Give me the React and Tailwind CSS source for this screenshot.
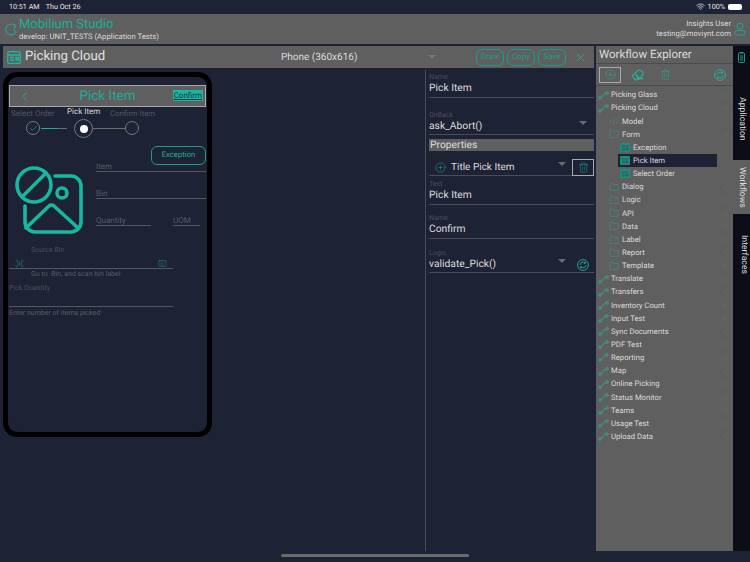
import React from "react";
import {
  Check,
  ChevronDown,
  ChevronLeft,
  CirclePlus,
  CodeXml,
  Folder,
  Keyboard,
  ScanBarcode,
  Trash2,
  Wifi,
  X
} from "lucide-react";

function WorkflowIcon() {
  return (
    <svg width="11" height="9" viewBox="0 0 11 9" fill="none" stroke="#27b39b" strokeWidth="0.8" className="shrink-0">
      <circle cx="2" cy="7" r="1.3" />
      <circle cx="9" cy="2" r="1.3" />
      <path d="M3.2 6.4C5.6 6 4.6 2.6 7.8 2.3" />
    </svg>
  );
}

function FormIcon() {
  return (
    <svg width="10" height="9" viewBox="0 0 10 9" className="shrink-0 mr-px">
      <rect width="10" height="9" rx="1" fill="#1a8f7e" />
      <path d="M1 3h8M2 5h3M2 7h3M6 5h2v2H6z" stroke="#3c4a55" strokeWidth="0.8" fill="none" />
    </svg>
  );
}

function PanelIcon() {
  return (
    <svg width="14" height="13" viewBox="0 0 14 13" fill="none" stroke="#1fb89f" strokeWidth="1.3">
      <rect x="0.7" y="0.7" width="12.6" height="11.6" rx="1.6" />
      <path d="M1 4h12M3 6.5h4M3 9h4M9 6.5h2.5V9H9z" />
    </svg>
  );
}

function LogoIcon() {
  return (
    <svg width="12" height="13" viewBox="0 0 12 13" fill="none" stroke="#1fa890" strokeWidth="1.1">
      <path d="M5 1.2C7.8.6 10.6 2 10.8 3.6 8.6 4 8.2 8 10.8 9.2 9.8 11.4 6.6 12.4 4.4 11.6 1.6 10.6.6 8 1 5.4 1.4 3.2 3 1.6 5 1.2Z" />
    </svg>
  );
}

function UserIcon() {
  return (
    <svg width="12" height="14" viewBox="0 0 12 14" fill="none" stroke="#1fa890" strokeWidth="1">
      <circle cx="6" cy="4" r="3" />
      <rect x="1" y="8.5" width="10" height="4.5" rx="2.2" />
    </svg>
  );
}

function EraseIcon() {
  return (
    <svg width="12" height="12" viewBox="0 0 12 12" fill="none" stroke="#1fb89f" strokeWidth="1">
      <rect x="0.6" y="2.6" width="10.8" height="6.8" rx="3.2" transform="rotate(-40 6 6)" />
      <path d="M3.6 5.2 7 9.2M5 9.5h6" strokeWidth="1.4" />
    </svg>
  );
}

function SyncIcon({ className }) {
  return (
    <svg width="12" height="12" viewBox="0 0 12 12" fill="none" stroke="#1fb89f" strokeWidth="0.9" className={className}>
      <circle cx="6" cy="6" r="5.4" />
      <path d="M3 6a3 3 0 0 1 5.2-2M9 6a3 3 0 0 1-5.2 2M8.4 2.6V4.2H6.9M3.6 9.4V7.8H5.1" />
    </svg>
  );
}

function NoImageIcon() {
  return (
    <svg width="68" height="68" viewBox="0 0 68 68" fill="none" stroke="#17b8a0" strokeWidth="3.6" strokeLinecap="round" strokeLinejoin="round">
      <circle cx="19" cy="19" r="17" />
      <path d="M7 31 31 7" />
      <path d="M40 10h16a10 10 0 0 1 10 10v36a10 10 0 0 1-10 10H20a10 10 0 0 1-10-10V40" />
      <circle cx="47" cy="27" r="5" />
      <path d="M11 62 34 40a4 4 0 0 1 5 0l23 21" />
    </svg>
  );
}

function OutlineButton({ label }) {
  return (
    <div className="w-[28px] h-[17px] rounded-[6px] border-[1.5px] border-[#1a9e8a] flex items-center justify-center text-[8px] text-[#1a9e8a]">
      {label}
    </div>
  );
}

function Field({ label, value, caret, after, className }) {
  return (
    <div className={"relative border-b border-[#4a4c58] " + className}>
      <div className="text-[7px] leading-[8px] text-[#4b4e5c]">{label}</div>
      <div className="text-[10.3px] leading-[14px] text-[#dcdcdc]">{value}</div>
      {caret && <div className={"absolute top-[10px] w-0 h-0 border-x-[4px] border-x-transparent border-t-[4px] border-t-[#6b6b6b] " + caret} />}
      {after}
    </div>
  );
}

function PhoneField({ label, className }) {
  return (
    <div className={"h-[10px] border-b border-[#55565f] text-[8px] leading-[10px] text-[#5a5c66] " + className}>
      {label}
    </div>
  );
}

function Phone() {
  return (
    <div className="ml-[3px] mt-[4px] w-[209px] h-[365px] rounded-[14px] border-[5px] border-black bg-[#1e2235]">
      <div className="mt-[8px] mx-px h-[22px] bg-[#5f5f5f] border border-[#a9a9a9] flex items-center relative">
        <ChevronLeft size={15} strokeWidth={1.4} className="text-[#1fb89f] ml-[7px]" />
        <div className="flex-1 text-center text-[13.5px] text-[#1cae98] pr-[22px] mt-px">Pick Item</div>
        <div className="absolute right-[2px] top-[4px] h-[11px] px-px bg-[#14b8a0] text-[8px] leading-[11px] text-[#20323a] underline">Confirm</div>
      </div>

      <div className="relative h-[39px]">
        <div className="absolute left-[3px] top-[2px] text-[8px] leading-[10px] text-[#55565f]">Select Order</div>
        <div className="absolute left-[59px] top-0 text-[8px] leading-[10px] text-[#dcdcdc]">Pick Item</div>
        <div className="absolute left-[102px] top-[2px] text-[7.8px] leading-[10px] text-[#55565f]">Confirm Item</div>
        <div className="absolute left-[18px] top-[14px] w-[14px] h-[14px] rounded-full border border-[#777] flex items-center justify-center">
          <Check size={9} strokeWidth={1.6} className="text-[#1fb89f]" />
        </div>
        <div className="absolute left-[33px] top-[21px] w-[17px] h-px bg-[#1cae98]" />
        <div className="absolute left-[50px] top-[21px] w-[9px] h-px bg-[#6b6b6b]" />
        <div className="absolute left-[66px] top-[12px] w-[19px] h-[19px] rounded-full border border-[#777] flex items-center justify-center">
          <div className="w-[8px] h-[8px] rounded-full bg-white" />
        </div>
        <div className="absolute left-[85px] top-[21px] w-[32px] h-px bg-[#6b6b6b]" />
        <div className="absolute left-[117px] top-[14px] w-[14px] h-[14px] rounded-full border border-[#777]" />
      </div>

      <div className="flex justify-end h-[19px]">
        <div className="w-[55px] h-[19px] rounded-[6px] border-[1.5px] border-[#1a9e8a] text-[7.7px] leading-[16px] text-center text-[#1cae98] mr-px">Exception</div>
      </div>

      <div className="flex h-[67px]">
        <div className="ml-[7px] mt-px w-[81px] shrink-0">
          <NoImageIcon />
        </div>
        <div className="flex-1 mr-px -mt-[3px]">
          <PhoneField label="Item" className="" />
          <PhoneField label="Bin" className="mt-[17px]" />
          <div className="flex mt-[17px]">
            <PhoneField label="Quantity" className="w-[55px]" />
            <PhoneField label="UOM" className="w-[27px] ml-[22px]" />
          </div>
        </div>
      </div>

      <div className="mt-[13px] ml-[23px] text-[7px] leading-[10px] text-[#4f505b]">Source Bin</div>
      <div className="mt-[4px] mx-px w-[164px] h-[10px] border-b border-[#55565f] flex justify-between px-[6px]">
        <ScanBarcode size={9} strokeWidth={1.2} className="text-[#1a9e8a]" />
        <Keyboard size={9} strokeWidth={1.2} className="text-[#1a9e8a]" />
      </div>
      <div className="ml-[23px] text-[7px] leading-[10px] text-[#5a5c66]">Go to&nbsp; Bin, and scan bin label</div>
      <div className="mt-[4px] ml-px text-[7px] leading-[10px] text-[#4f505b]">Pick Quantity</div>
      <div className="ml-px w-[164px] h-[14px] border-b border-[#55565f]" />
      <div className="mt-px ml-px text-[7px] leading-[10px] text-[#5a5c66]">Enter number of items picked</div>
    </div>
  );
}

function Properties() {
  return (
    <div className="w-[169px] ml-[3px] border-l border-[#4a4c58] pl-[3px] pt-[3px] mt-[2px]">
      <Field label="Name" value="Pick Item" className="h-[25px]" />
      <Field label="OnBack" value="ask_Abort()" caret="right-[7px]" className="mt-[13px] h-[24px]" />
      <div className="mt-[4px] h-[12px] bg-[#5f5f5f] text-[10.3px] leading-[12px] text-[#dcdcdc] pl-px">Properties</div>
      <div className="relative mt-[8px] h-[17px] border-b border-[#4a4c58] flex items-center">
        <CirclePlus size={11} strokeWidth={1} className="text-[#1fb89f] ml-[6px]" />
        <span className="ml-[5px] text-[10px] text-[#dcdcdc]">Title Pick Item</span>
        <div className="absolute left-[129px] top-[3px] w-0 h-0 border-x-[4px] border-x-transparent border-t-[4px] border-t-[#6b6b6b]" />
        <div className="absolute right-0 top-0 w-[22px] h-[17px] border border-[#a9a9a9] flex items-center justify-center">
          <Trash2 size={11} strokeWidth={1} className="text-[#1fb89f]" />
        </div>
      </div>
      <Field label="Text" value="Pick Item" className="mt-[4px] h-[25px]" />
      <Field label="Name" value="Confirm" className="mt-[9px] h-[25px]" />
      <Field
        label="Logic"
        value="validate_Pick()"
        caret="left-[129px]"
        className="mt-[10px] h-[24px]"
        after={<SyncIcon className="absolute right-[5px] top-[10px]" />}
      />
    </div>
  );
}

const tree = [
  { name: "Picking Glass", kind: "flow", chev: "left" },
  { name: "Picking Cloud", kind: "flow", chev: "down" },
  { name: "Model", kind: "code" },
  { name: "Form", kind: "folder", chev: "down" },
  { name: "Exception", kind: "form" },
  { name: "Pick Item", kind: "form", active: true },
  { name: "Select Order", kind: "form" },
  { name: "Dialog", kind: "folder", chev: "left" },
  { name: "Logic", kind: "folder", chev: "left" },
  { name: "API", kind: "folder", chev: "left" },
  { name: "Data", kind: "folder", chev: "left" },
  { name: "Label", kind: "folder", chev: "left" },
  { name: "Report", kind: "folder", chev: "left" },
  { name: "Template", kind: "folder", chev: "left" },
  { name: "Translate", kind: "flow", chev: "left" },
  { name: "Transfers", kind: "flow", chev: "left" },
  { name: "Inventory Count", kind: "flow", chev: "left" },
  { name: "Input Test", kind: "flow", chev: "left" },
  { name: "Sync Documents", kind: "flow", chev: "left" },
  { name: "PDF Test", kind: "flow", chev: "left" },
  { name: "Reporting", kind: "flow", chev: "left" },
  { name: "Map", kind: "flow", chev: "left" },
  { name: "Online Picking", kind: "flow", chev: "left" },
  { name: "Status Monitor", kind: "flow", chev: "left" },
  { name: "Teams", kind: "flow", chev: "left" },
  { name: "Usage Test", kind: "flow", chev: "left" },
  { name: "Upload Data", kind: "flow", chev: "left" }
];

function TreeRow({ item }) {
  const pad = item.kind === "flow" ? "pl-[2px]" : item.kind === "form" ? "pl-[24px]" : "pl-[13px]";
  return (
    <div className={"relative h-[13.15px] flex items-center text-[7.7px] text-[#dcdcdc] " + pad}>
      {item.active && <div className="absolute left-[22px] top-0 w-[99px] h-[13.15px] bg-[#1e2235]" />}
      <div className="relative flex items-center gap-[2px]">
        {item.kind === "flow" && <WorkflowIcon />}
        {item.kind === "code" && <CodeXml size={10} strokeWidth={1} className="text-[#27b39b] shrink-0 mr-px" />}
        {item.kind === "folder" && <Folder size={10} strokeWidth={1} className="text-[#27b39b] shrink-0 mr-px" />}
        {item.kind === "form" && <FormIcon />}
        <span className="whitespace-nowrap">{item.name}</span>
      </div>
      {item.chev === "left" && <ChevronLeft size={11} strokeWidth={1} className="absolute right-[2px] text-[#767676]" />}
      {item.chev === "down" && <ChevronDown size={11} strokeWidth={1} className="absolute right-[2px] text-[#767676]" />}
    </div>
  );
}

function Explorer() {
  return (
    <div className="w-[137px] ml-[2px] bg-[#5f5f5f] flex flex-col">
      <div className="h-[18px] border-b border-[#4a4a4a] text-[11.5px] leading-[17px] text-[#dcdcdc] pl-[3px]">Workflow Explorer</div>
      <div className="h-[22px] border-b border-[#4a4a4a] flex items-center relative">
        <div className="ml-[3px] w-[22px] h-[16px] border border-[#a9a9a9] flex items-center justify-center">
          <CirclePlus size={11} strokeWidth={1} className="text-[#1fb89f]" />
        </div>
        <div className="ml-[11px]">
          <EraseIcon />
        </div>
        <Trash2 size={11} strokeWidth={1} className="ml-[16px] text-[#1fb89f]" />
        <SyncIcon className="absolute right-[7px]" />
      </div>
      <div className="pt-[2.5px]">
        {tree.map((item) => (
          <TreeRow key={item.name} item={item} />
        ))}
      </div>
    </div>
  );
}

function Tabs() {
  return (
    <div className="w-[17px] flex flex-col bg-[#0c0d16] text-[8.7px] text-[#dcdcdc]">
      <div className="h-[22px] flex items-center justify-center">
        <svg width="7" height="11" viewBox="0 0 7 11" fill="none" stroke="#1a9e8a" strokeWidth="1">
          <rect x="0.5" y="1" width="6" height="9.5" rx="1" />
          <path d="M2 0.5h3M2 4h3M2 6h3M2 8h3" />
        </svg>
      </div>
      <div className="h-[92px] pt-[9px] flex items-center justify-center [writing-mode:vertical-rl]">Application</div>
      <div className="h-[54px] bg-[#5f5f5f] flex items-center justify-center [writing-mode:vertical-rl]">Workflows</div>
      <div className="pt-[21px] flex justify-center [writing-mode:vertical-rl]">Interfaces</div>
    </div>
  );
}

export default function App() {
  return (
    <div className="w-[750px] h-[562px] overflow-hidden bg-[#1e2235] font-['Roboto',sans-serif] [text-rendering:geometricPrecision]">
      <div className="h-[14px] flex items-center justify-between pl-[9px] pr-[8px] text-[7.2px] text-[#e6e6e6]">
        <div className="flex gap-[6px]">
          <span>10:51 AM</span>
          <span>Thu Oct 26</span>
        </div>
        <div className="flex items-center gap-[3px]">
          <Wifi size={9} strokeWidth={2} />
          <span>100%</span>
          <div className="w-[14px] h-[6px] rounded-[2px] bg-white" />
        </div>
      </div>

      <div className="h-[30px] bg-[#5f5f5f] flex items-center pl-[5px] pr-[4px]">
        <LogoIcon />
        <div className="ml-[2px]">
          <div className="text-[13px] leading-[14px] text-[#1cae98] mt-px">Mobilium Studio</div>
          <div className="text-[7.7px] leading-[10px] text-[#dcdcdc]">develop: UNIT_TESTS (Application Tests)</div>
        </div>
        <div className="ml-auto text-right text-[7.7px] leading-[10px] text-[#dcdcdc]">
          <div>Insights User</div>
          <div>testing@moviynt.com</div>
        </div>
        <div className="ml-[3px]">
          <UserIcon />
        </div>
      </div>

      <div className="mt-[2px] h-[505px] flex pl-[3px]">
        <div className="w-[591px] flex flex-col">
          <div className="h-[22px] bg-[#5f5f5f] flex items-center relative">
            <div className="ml-[4px]">
              <PanelIcon />
            </div>
            <div className="ml-[4px] text-[13.2px] text-[#e0e0e0]">Picking Cloud</div>
            <div className="absolute left-[278px] text-[10px] text-[#dcdcdc]">Phone (360x616)</div>
            <div className="absolute left-[425px] top-[9px] w-0 h-0 border-x-[4px] border-x-transparent border-t-[4px] border-t-[#777]" />
            <div className="ml-auto flex items-center gap-[3px] mr-[7px]">
              <OutlineButton label="Draw" />
              <OutlineButton label="Copy" />
              <OutlineButton label="Save" />
              <X size={13} strokeWidth={1.3} className="ml-[5px] text-[#1fb89f]" />
            </div>
          </div>
          <div className="flex flex-1 -ml-[3px]">
            <div className="w-[422px] shrink-0">
              <Phone />
            </div>
            <Properties />
          </div>
        </div>
        <Explorer />
        <Tabs />
      </div>

      <div className="mt-[3px] mx-auto w-[188px] h-[3px] rounded-full bg-[#6b6b6b]" />
    </div>
  );
}
